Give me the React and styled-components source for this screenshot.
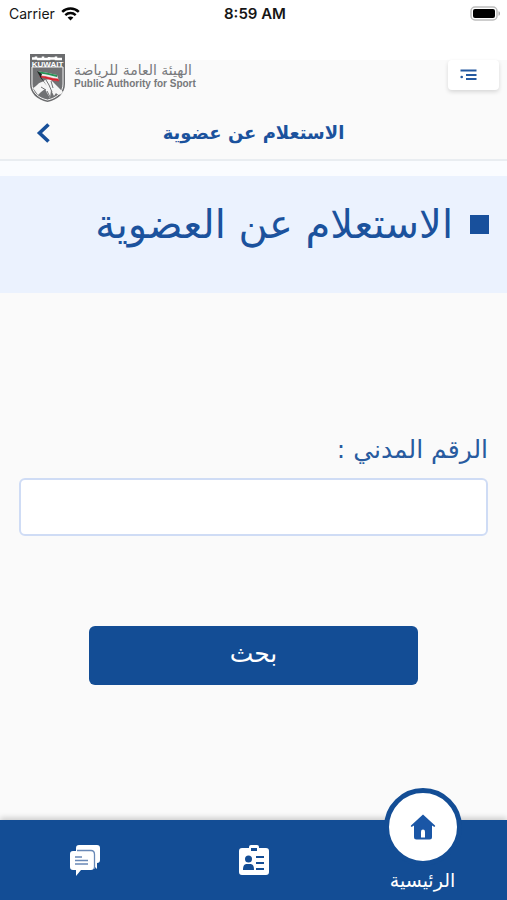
import React from "react";
import styled, { createGlobalStyle } from "styled-components";

const blue = "#134d95";
const arabic = `"DejaVu Sans", "Noto Sans", sans-serif`;

const GlobalStyle = createGlobalStyle`
  *, *::before, *::after { box-sizing: border-box; }
  body { margin: 0; background: #fafafa; font-family: ${arabic}; }
  button { border: 0; padding: 0; background: none; font: inherit; color: inherit; cursor: pointer; }
`;

const Screen = styled.div`
  display: flex;
  flex-direction: column;
  min-height: 100vh;
`;

const StatusBar = styled.div`
  display: grid;
  grid-template-columns: 1fr auto 1fr;
  align-items: start;
  height: 60px;
  padding: 5px 6px 0 9px;
  background: #fff;
  color: #161616;
  font-family: Inter, sans-serif;
  font-size: 14px;
  line-height: 18px;
`;

const Carrier = styled.div`
  display: flex;
  align-items: center;
  gap: 6px;
`;

const Clock = styled.time`
  font-size: 15px;
  font-weight: 600;
`;

const BatteryIcon = styled.svg`
  justify-self: end;
`;

const Header = styled.header`
  background: #fafafa;
  border-bottom: 2px solid #e9edf1;
`;

const BrandRow = styled.div`
  display: flex;
  justify-content: space-between;
  align-items: flex-start;
  padding: 0 8px 0 29px;
`;

const Brand = styled.div`
  display: flex;
  align-items: center;
  gap: 8px;
  margin-top: -7px;
`;

const BrandNames = styled.div`
  display: flex;
  flex-direction: column;
  align-items: flex-start;
  padding-bottom: 4px;
  color: #77787a;
`;

const BrandArabic = styled.span`
  font-size: 14px;
  line-height: 16px;
`;

const BrandEnglish = styled.span`
  font-family: "Liberation Sans", Arial, sans-serif;
  font-size: 10px;
  font-weight: 700;
  line-height: 12px;
`;

const MenuButton = styled.button`
  display: flex;
  align-items: center;
  width: 51px;
  height: 30px;
  padding-left: 12px;
  background: #fff;
  border-radius: 4px;
  box-shadow: 0 2px 4px rgba(0, 0, 0, 0.14);
`;

const TitleRow = styled.div`
  display: grid;
  grid-template-columns: 1fr auto 1fr;
  align-items: center;
  height: 56px;
  padding: 4px 32px 0;
`;

const BackButton = styled.button`
  display: flex;
  justify-self: start;
`;

const PageTitle = styled.h1`
  margin: 0;
  color: #1b529d;
  font-size: 18px;
  font-weight: 700;
  line-height: 28px;
`;

const Banner = styled.section`
  height: 132px;
  padding: 20px 18px;
  border-top: 15px solid #fafcff;
  background: #ebf2fe;
`;

const BannerTitle = styled.h2`
  display: flex;
  align-items: center;
  gap: 17px;
  margin: 0;
  color: #1b529d;
  font-size: 40px;
  font-weight: 400;
  line-height: 56px;
  white-space: nowrap;
`;

const Square = styled.span`
  width: 19px;
  height: 19px;
  background: #18509c;
`;

const Form = styled.form`
  display: flex;
  flex: 1;
  flex-direction: column;
  padding: 137px 19px 56px;
`;

const Label = styled.label`
  color: #285b9f;
  font-size: 25px;
  line-height: 40px;
`;

const CivilInput = styled.input`
  width: 100%;
  height: 58px;
  margin-top: 8px;
  padding: 0 14px;
  border: 2px solid #cfdcf5;
  border-radius: 6px;
  background: #fff;
  color: #1b529d;
  font-family: ${arabic};
  font-size: 25px;
`;

const SearchButton = styled.button`
  align-self: center;
  width: 70%;
  height: 59px;
  margin-top: 90px;
  padding-bottom: 4px;
  border-radius: 6px;
  background: ${blue};
  color: #fff;
  font-size: 25px;
`;

const TabBar = styled.nav`
  display: grid;
  grid-template-columns: repeat(3, 1fr);
  height: 80px;
  background: ${blue};
  box-shadow: 0 -2px 6px rgba(0, 0, 0, 0.2);
`;

const Tab = styled.button`
  display: flex;
  flex-direction: column;
  align-items: center;
  justify-content: ${(p) => (p.$active ? "flex-start" : "center")};
  color: #fff;
  font-size: 19px;
  line-height: 28px;
`;

const HomeBadge = styled.span`
  display: flex;
  align-items: center;
  justify-content: center;
  width: 78px;
  height: 78px;
  margin-top: -32px;
  border: 5px solid ${blue};
  border-radius: 50%;
  background: #fff;
`;

function WifiIcon() {
  return (
    <svg width="19" height="14" viewBox="0 0 19 14" fill="none" stroke="#050505" aria-hidden="true">
      <path d="M1.2 4.9C5.9.4 13.1.4 17.8 4.9" strokeWidth="2.5" />
      <path d="M4.3 8.1c3-2.8 7.4-2.8 10.4 0" strokeWidth="2.4" />
      <path d="M9.5 13.6 6.6 10.5c1.7-1.5 4.1-1.5 5.8 0Z" fill="#050505" stroke="none" />
    </svg>
  );
}

function Battery() {
  return (
    <BatteryIcon width="31" height="16" viewBox="0 0 31 16" aria-hidden="true">
      <rect x="1" y="2" width="26" height="13" rx="4" fill="#fff" stroke="#bdbdbd" strokeWidth="1.5" />
      <rect x="3" y="4" width="22" height="9" rx="2" fill="#000" />
      <path d="M28.5 6.2c2 .5 2 4.1 0 4.6Z" fill="#aaa" />
    </BatteryIcon>
  );
}

function Crest() {
  return (
    <svg width="37" height="50" viewBox="0 0 37 50" role="img" aria-label="Kuwait">
      <path d="M1 1h35v30c0 9-7 16-17.5 18C8 47 1 40 1 31Z" fill="#6b6c6e" />
      <path d="M3 14h31v17c0 8-6 14-15.5 16C9 45 3 39 3 31Z" fill="#707173" stroke="#f4f4f4" strokeWidth="1" />
      <path d="M3 5.500h4V3.500M8 6h6V3.500M15 6h5V4M21 5.500h5M27 3.500V6h6" fill="none" stroke="#fff" strokeWidth="2.5" />
      <text x="18.5" y="13.5" textAnchor="middle" fontFamily="Liberation Sans" fontSize="8" fontWeight="700" fill="#fff">KUWAIT</text>
      <path d="M4 35c4-2 6-6 9-6l3-2 5-1 4 4 3 3 6 6c-3 4-5 3-7 1l-2 3-3-6-1 8-3-5-2-4-4 3-3 3Z" fill="#f5f5f5" />
      <path d="m17 27 3 5 3 7M12 34l5 3M22 28l2 7M18 38l3 6" fill="none" stroke="#707173" strokeWidth="1" />
      <path d="M9 19c6-1 12 2 19 3l2 6c-7 0-11-4-19-4Z" fill="#eee" />
      <path d="M9 19c6-1 12 2 19 3v2c-7-1-12-4-18-3Z" fill="#269357" />
      <path d="M11 23c7 0 12 3 18 3l1 2c-7 0-11-3-19-4Z" fill="#d6202e" stroke="#d6202e" strokeWidth=".6" />
      <path d="m8 18 5 3-1 3 6 9-7-9Z" fill="#222" />
    </svg>
  );
}

function MenuIcon() {
  return (
    <svg width="17" height="12" viewBox="0 0 17 12" fill="none" stroke="#2559a0" strokeWidth="2" aria-hidden="true">
      <path d="M.5 1.500h16M6 6h10.500M6 10h10.500" />
      <circle cx="1.700" cy="8" r="1.300" fill="#2559a0" stroke="none" />
    </svg>
  );
}

function ChevronIcon() {
  return (
    <svg width="20" height="22" viewBox="0 0 20 22" fill="none" stroke="#174f99" strokeWidth="3.6" aria-hidden="true">
      <path d="m16.500 2.500-9 8.500 9 8.500" />
    </svg>
  );
}

function ChatIcon() {
  return (
    <svg width="32" height="32" viewBox="0 0 32 32" aria-hidden="true">
      <path d="M10 1h18a3 3 0 0 1 3 3v12a3 3 0 0 1-3 3v6l-5-5V10a3 3 0 0 0-3-3H7V4a3 3 0 0 1 3-3Z" fill="#fff" />
      <path d="M4 7h18a3 3 0 0 1 3 3v13a3 3 0 0 1-3 3H12l-5 6v-6H4a3 3 0 0 1-3-3V10a3 3 0 0 1 3-3Z" fill="#fff" />
      <path d="M8 6.500h14q3.500 0 3.500 4V25M6 13h7M6 16.500h13M6 20h13" fill="none" stroke="#6888b6" strokeWidth="1.3" />
    </svg>
  );
}

function BadgeIcon() {
  return (
    <svg width="32" height="32" viewBox="0 0 32 32" aria-hidden="true">
      <path d="M4 4h7V3a2 2 0 0 1 2-2h6a2 2 0 0 1 2 2v1h7a3 3 0 0 1 3 3v21a3 3 0 0 1-3 3H4a3 3 0 0 1-3-3V7a3 3 0 0 1 3-3Z" fill="#fff" />
      <path d="M13 4h6v3h-6ZM18 12h8v2h-8ZM18 18h8v2h-8ZM18 24h8v2h-8Z" fill={blue} />
      <circle cx="10.5" cy="15" r="3.5" fill={blue} />
      <path d="M5 26c0-4 1-6 4-6h3c3 0 4 2 4 6Z" fill={blue} />
    </svg>
  );
}

function HomeIcon() {
  return (
    <svg width="26" height="26" viewBox="0 0 26 26" aria-hidden="true">
      <path d="M13 .5 25 11.500c.5.800-.3 1.500-1 1.200l-2-1.200V23a2.500 2.500 0 0 1-2.500 2.500h-13A2.500 2.500 0 0 1 4 23V11.500l-2 1.200c-.7.300-1.500-.4-1-1.200Z" fill="#1a56a6" />
      <path d="M11 23.500v-6a2 2 0 0 1 4 0v6Z" fill="#fff" />
    </svg>
  );
}

export default function App() {
  return (
    <>
      <GlobalStyle />
      <Screen lang="ar">
        <StatusBar>
          <Carrier>Carrier <WifiIcon /></Carrier>
          <Clock>8:59 AM</Clock>
          <Battery />
        </StatusBar>
        <Header>
          <BrandRow>
            <Brand>
              <Crest />
              <BrandNames>
                <BrandArabic dir="rtl">الهيئة العامة للرياضة</BrandArabic>
                <BrandEnglish lang="en">Public Authority for Sport</BrandEnglish>
              </BrandNames>
            </Brand>
            <MenuButton type="button" aria-label="القائمة"><MenuIcon /></MenuButton>
          </BrandRow>
          <TitleRow>
            <BackButton type="button" aria-label="رجوع"><ChevronIcon /></BackButton>
            <PageTitle dir="rtl">الاستعلام عن عضوية</PageTitle>
          </TitleRow>
        </Header>
        <Banner dir="rtl">
          <BannerTitle><Square />الاستعلام عن العضوية</BannerTitle>
        </Banner>
        <Form dir="rtl" onSubmit={(e) => e.preventDefault()}>
          <Label htmlFor="civil-id">الرقم المدني :</Label>
          <CivilInput id="civil-id" type="text" inputMode="numeric" />
          <SearchButton type="submit">بحث</SearchButton>
        </Form>
        <TabBar>
          <Tab type="button" aria-label="الرسائل"><ChatIcon /></Tab>
          <Tab type="button" aria-label="البطاقة"><BadgeIcon /></Tab>
          <Tab type="button" $active aria-current="page">
            <HomeBadge><HomeIcon /></HomeBadge>
            الرئيسية
          </Tab>
        </TabBar>
      </Screen>
    </>
  );
}
